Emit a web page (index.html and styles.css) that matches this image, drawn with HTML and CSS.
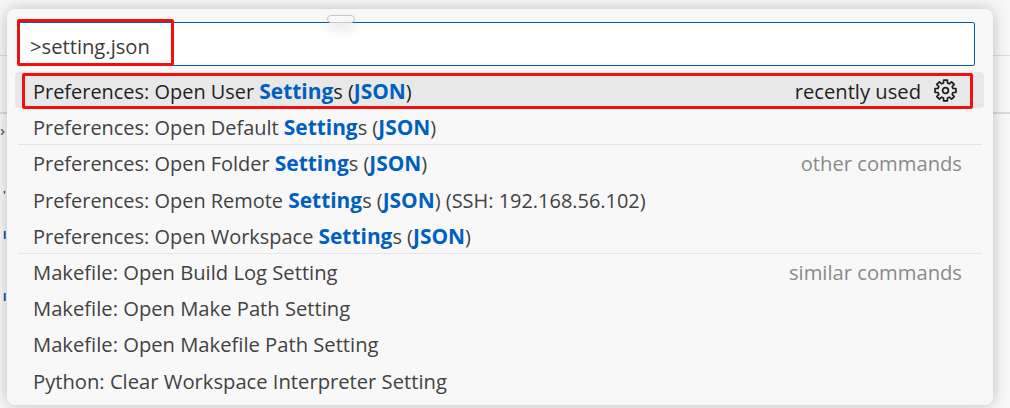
FILE: index.html
```html
<!DOCTYPE html>
<html lang="en">
<head>
    <meta charset="UTF-8">
    <title>Command Palette</title>
    <link rel="stylesheet" href="styles.css">
</head>
<body>
    <div class="workbench">
        <div class="bg-line bg-line-top"></div>
        <div class="bg-line bg-line-tabs"></div>
        <span class="bg-char bg-chevron">›</span>
        <span class="bg-char bg-mark-red">'</span>
        <span class="bg-char bg-mark-blue">l</span>
        <span class="bg-char bg-mark-dark">l</span>

        <div class="palette">
            <div class="drag-handle"></div>
            <div class="input-box">&gt;setting.json</div>
            <ul class="results">
                <li class="row row-active">
                    <span class="label label-pref">Preferences: Open User <b>Setting</b>s (<b>JSON</b>)</span>
                    <span class="meta">recently used</span>
                    <svg class="gear" viewBox="0 0 16 16" width="23" height="23" fill="none" stroke="#1f1f1f" stroke-width="1.2" stroke-linejoin="round">
                        <polygon transform="translate(8 8)" points="-1.4,-5.2 -1.28,-7.29 1.28,-7.29 1.4,-5.2 2.7,-4.68 4.24,-6.06 6.06,-4.24 4.68,-2.7 5.2,-1.4 7.29,-1.28 7.29,1.28 5.2,1.4 4.68,2.7 6.06,4.24 4.24,6.06 2.7,4.68 1.4,5.2 1.28,7.29 -1.28,7.29 -1.4,5.2 -2.7,4.68 -4.24,6.06 -6.06,4.24 -4.68,2.7 -5.2,1.4 -7.29,1.28 -7.29,-1.28 -5.2,-1.4 -4.68,-2.7 -6.06,-4.24 -4.24,-6.06 -2.7,-4.68"/>
                        <circle cx="8" cy="8" r="2"/>
                    </svg>
                </li>
                <li class="row">
                    <span class="label label-pref">Preferences: Open Default <b>Setting</b>s (<b>JSON</b>)</span>
                </li>
                <li class="row row-sep">
                    <span class="label label-pref">Preferences: Open Folder <b>Setting</b>s (<b>JSON</b>)</span>
                    <span class="meta meta-group">other commands</span>
                </li>
                <li class="row">
                    <span class="label label-pref">Preferences: Open Remote <b>Setting</b>s (<b>JSON</b>) (SSH: 192.168.56.102)</span>
                </li>
                <li class="row">
                    <span class="label label-pref">Preferences: Open Workspace <b>Setting</b>s (<b>JSON</b>)</span>
                </li>
                <li class="row row-sep">
                    <span class="label">Makefile: Open Build Log Setting</span>
                    <span class="meta meta-group">similar commands</span>
                </li>
                <li class="row">
                    <span class="label">Makefile: Open Make Path Setting</span>
                </li>
                <li class="row">
                    <span class="label">Makefile: Open Makefile Path Setting</span>
                </li>
                <li class="row">
                    <span class="label">Python: Clear Workspace Interpreter Setting</span>
                </li>
            </ul>
        </div>

        <!-- red annotation boxes from the screenshot -->
        <div class="mark mark-input"></div>
        <div class="mark mark-row"></div>
    </div>
</body>
</html>
```

FILE: styles.css
```css
* {
    box-sizing: border-box;
}

body {
    margin: 0;
    font-family: 'Open Sans', 'Noto Sans', sans-serif;
    background: #f8f8f8;
    overflow: hidden;
}

.workbench {
    position: relative;
    width: 1010px;
    height: 408px;
    padding: 9px 17px 3px 7px;
    background: #f8f8f8;
}

.bg-line {
    position: absolute;
    left: 0;
    right: 0;
    height: 1px;
    background: #dcdcdc;
}

.bg-line-top { top: 55px; }
.bg-line-tabs { top: 112px; height: 2px; }

.bg-char {
    position: absolute;
    left: 3px;
    font-size: 11px;
    line-height: 14px;
    font-weight: 700;
}

.bg-chevron { top: 124px; left: 0; color: #777; font-size: 14px; }
.bg-mark-red { top: 188px; color: #a31515; }
.bg-mark-blue { top: 228px; color: #0451a5; }
.bg-mark-dark { top: 290px; color: #0451a5; }

.palette {
    position: relative;
    height: 396px;
    padding: 13px 9px 0 8px;
    background: #f8f8f8;
    border-radius: 8px;
    box-shadow: 0 0 16px rgba(0, 0, 0, 0.24);
}

.drag-handle {
    position: absolute;
    top: 6px;
    left: 320px;
    width: 28px;
    height: 8px;
    background: #f8f8f8;
    border: 1px solid #c8c8c8;
    border-radius: 4px;
    box-shadow: 0 6px 12px rgba(0, 0, 0, 0.12);
    z-index: 1;
}

.input-box {
    height: 44px;
    margin: 0 9px 0 3px;
    padding-left: 11px;
    background: #fff;
    border: 1px solid #0060c0;
    border-radius: 2px;
    color: #3b3b3b;
    font-size: 20.2px;
    line-height: 47px;
}

.results {
    list-style: none;
    margin: 6px 0 0;
    padding: 0;
}

.row {
    display: flex;
    align-items: center;
    height: 36.2px;
    padding: 2px 22px 0 18px;
    color: #424242;
    font-size: 20.2px;
    white-space: nowrap;
}

.row b {
    color: #0060c0;
    font-weight: 700;
    font-size: 20.9px;
}

.row-active {
    background: #e8e8e8;
    border-radius: 4px;
    color: #1f1f1f;
    padding-right: 27px;
}

.row-sep {
    border-top: 1px solid #e5e5e5;
    margin-left: 3px;
    margin-right: 2px;
    padding-top: 0;
    padding-left: 15px;
    padding-right: 20px;
}

.label {
    flex: 1;
}

.label-pref {
    font-size: 19.95px;
}

.meta {
    margin-right: 13px;
}

.meta-group {
    margin-right: 0;
    color: #8a8a8a;
}

.gear {
    display: block;
    margin-top: -1px;
}

.mark {
    position: absolute;
    border: 3px solid #f40f0f;
    border-radius: 2px;
}

.mark-input {
    left: 17px;
    top: 19px;
    width: 157px;
    height: 47px;
}

.mark-row {
    left: 22px;
    top: 73px;
    width: 951px;
    height: 36px;
}
```
